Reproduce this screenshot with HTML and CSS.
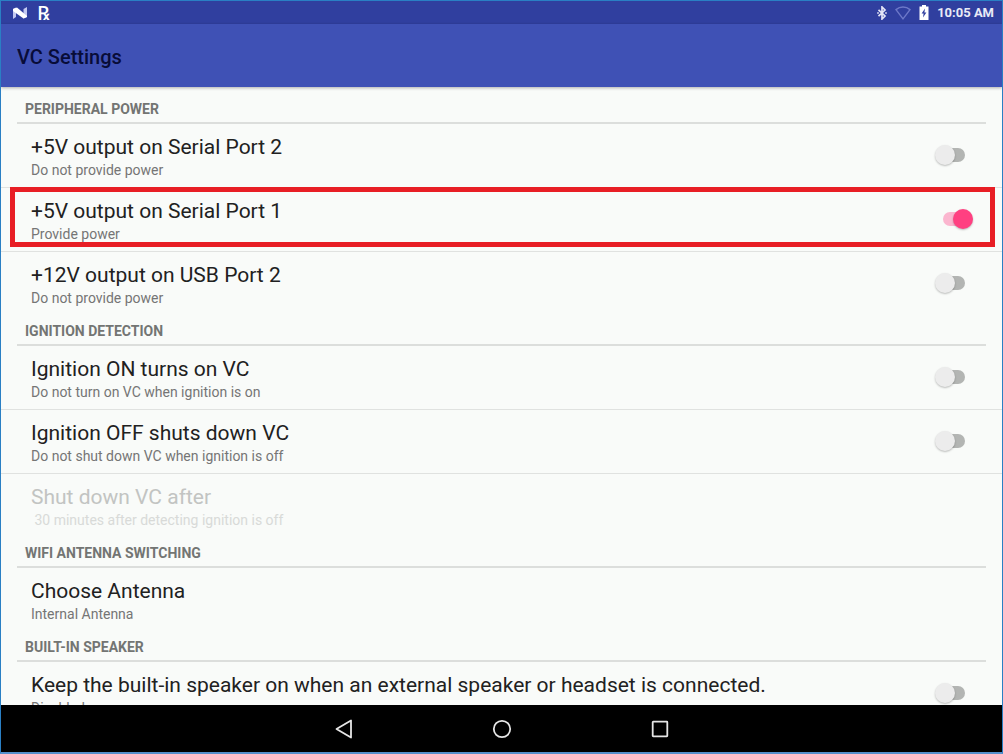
FILE: index.html
```html
<!DOCTYPE html>
<html lang="en">

<head>
    <meta charset="UTF-8" />
    <meta name="viewport" content="width=device-width, initial-scale=1.0" />
    <title>VC Settings</title>
    <link rel="stylesheet" href="styles.css">
</head>

<body>
    <div class="screen">
        <div class="status-bar">
            <div class="status-icons">
                <svg class="icon-n" width="14" height="12" viewBox="0 0 14 12" aria-hidden="true">
                    <path d="M0 2L3 0.5V10L0 12Z" fill="#c3c9f0" />
                    <path d="M10.5 2L14 0V10L10.5 11.5Z" fill="#c3c9f0" />
                    <path d="M0 2L4 0.5L14 9V10L10.5 11.5L0 4Z" fill="#fff" />
                </svg>
                <span class="icon-rx">℞</span>
            </div>
            <div class="status-icons right">
                <svg width="10" height="14" viewBox="0 0 10 14" fill="none" stroke="#e4e6f6" stroke-width="1.7" aria-hidden="true">
                    <path d="M1.5 3.8L8 10L5 13V1L8 4L1.5 10.2" />
                    <path d="M0.2 7H1.8M8.2 7H9.8" />
                </svg>
                <svg width="16" height="14" viewBox="0 0 16 14" fill="none" stroke="#6d78c8" stroke-width="1.4" aria-hidden="true">
                    <path d="M1 3.6C5 0.2 11 0.2 15 3.6L8 12.8Z" />
                </svg>
                <svg width="10" height="15" viewBox="0 0 10 15" aria-hidden="true">
                    <path d="M3 0H7V1.5H9.5V15H0.5V1.5H3Z" fill="#fff" />
                    <path d="M6 3.5L2.6 8.6H4.6L4 12.6L7.4 7.4H5.4Z" fill="#303f9f" />
                </svg>
                <span class="clock">10:05 AM</span>
            </div>
        </div>

        <header class="app-bar">
            <h1>VC Settings</h1>
        </header>

        <main class="content">
            <section>
                <h2>PERIPHERAL POWER</h2>
                <label class="row">
                    <span class="text">
                        <span class="title">+5V output on Serial Port 2</span>
                        <span class="summary">Do not provide power</span>
                    </span>
                    <input type="checkbox" role="switch" class="switch" />
                </label>
                <label class="row highlight">
                    <span class="text">
                        <span class="title">+5V output on Serial Port 1</span>
                        <span class="summary">Provide power</span>
                    </span>
                    <input type="checkbox" role="switch" class="switch" checked />
                </label>
                <label class="row">
                    <span class="text">
                        <span class="title">+12V output on USB Port 2</span>
                        <span class="summary">Do not provide power</span>
                    </span>
                    <input type="checkbox" role="switch" class="switch" />
                </label>
            </section>

            <section>
                <h2>IGNITION DETECTION</h2>
                <label class="row">
                    <span class="text">
                        <span class="title">Ignition ON turns on VC</span>
                        <span class="summary">Do not turn on VC when ignition is on</span>
                    </span>
                    <input type="checkbox" role="switch" class="switch" />
                </label>
                <label class="row">
                    <span class="text">
                        <span class="title">Ignition OFF shuts down VC</span>
                        <span class="summary">Do not shut down VC when ignition is off</span>
                    </span>
                    <input type="checkbox" role="switch" class="switch" />
                </label>
                <button type="button" class="row" disabled>
                    <span class="text">
                        <span class="title">Shut down VC after</span>
                        <span class="summary">&nbsp;30 minutes after detecting ignition is off</span>
                    </span>
                </button>
            </section>

            <section>
                <h2>WIFI ANTENNA SWITCHING</h2>
                <button type="button" class="row">
                    <span class="text">
                        <span class="title">Choose Antenna</span>
                        <span class="summary">Internal Antenna</span>
                    </span>
                </button>
            </section>

            <section>
                <h2>BUILT-IN SPEAKER</h2>
                <label class="row">
                    <span class="text">
                        <span class="title">Keep the built-in speaker on when an external speaker or headset is connected.</span>
                        <span class="summary">Disabled</span>
                    </span>
                    <input type="checkbox" role="switch" class="switch" />
                </label>
            </section>
        </main>

        <nav class="nav-bar">
            <button type="button" aria-label="Back">
                <svg width="20" height="20" viewBox="0 0 20 20"><path d="M17 1.5V18.5L2.5 10Z" /></svg>
            </button>
            <button type="button" aria-label="Home">
                <svg width="20" height="20" viewBox="0 0 20 20"><circle cx="10" cy="10" r="8.2" /></svg>
            </button>
            <button type="button" aria-label="Recent apps">
                <svg width="20" height="20" viewBox="0 0 20 20"><rect x="2.7" y="2.7" width="14.6" height="14.6" rx="0.5" /></svg>
            </button>
        </nav>
    </div>
</body>

</html>
```
FILE: styles.css
```css
* {
    box-sizing: border-box;
    margin: 0;
    padding: 0;
}

body {
    font-family: Roboto, 'Liberation Sans', sans-serif;
    color: #212121;
}

.screen {
    display: flex;
    flex-direction: column;
    height: 100vh;
    border: 1px solid #2a7fc4;
    border-bottom: 2px solid #5590cc;
    background-color: #f9fbf9;
    overflow: hidden;
}

/* Status bar */
.status-bar {
    display: flex;
    justify-content: space-between;
    align-items: center;
    flex: none;
    height: 23px;
    padding: 0 8px 0 12px;
    background-color: #303f9f;
}

.status-icons {
    display: flex;
    align-items: center;
    gap: 10px;
}

.status-icons.right {
    gap: 8px;
}

.icon-rx {
    font-family: 'Noto Sans', 'DejaVu Sans', sans-serif;
    font-size: 20px;
    font-weight: 500;
    line-height: 20px;
    color: #fff;
}

.clock {
    font-size: 13px;
    font-weight: 700;
    color: #e8eaf6;
}

/* App bar */
.app-bar {
    display: flex;
    align-items: center;
    flex: none;
    height: 63px;
    padding: 2px 16px 0;
    background-color: #3f51b5;
    box-shadow: 0 1px 3px rgba(0, 0, 0, 0.3);
    z-index: 1;
}

.app-bar h1 {
    font-size: 20px;
    font-weight: 500;
    color: #080c38;
}

/* Preference list */
.content {
    flex: 1;
    min-height: 0;
    padding-top: 6px;
    overflow: hidden;
}

h2 {
    height: 31px;
    margin: 0 16px;
    padding: 2px 8px 0;
    border-bottom: 2px solid #dcdedc;
    font-size: 14px;
    font-weight: 700;
    line-height: 28px;
    color: #737573;
}

.row {
    display: flex;
    align-items: center;
    justify-content: space-between;
    position: relative;
    width: 100%;
    height: 63px;
    padding: 0 37px 2px 30px;
    border: none;
    background: none;
    font-family: inherit;
    color: inherit;
    text-align: left;
}

.row + .row {
    height: 64px;
    border-top: 1px solid #e0e2e0;
}

.text {
    display: flex;
    flex-direction: column;
    padding-top: 4px;
}

.title {
    font-size: 21px;
    line-height: 26px;
}

.summary {
    font-size: 14px;
    line-height: 20px;
    color: #757575;
}

.row:disabled .title {
    color: #c2c4c2;
}

.row:disabled .summary {
    color: #d8dad8;
}

/* Red frame around the highlighted setting */
.highlight::after {
    content: "";
    position: absolute;
    top: -1px;
    right: 7px;
    bottom: 4px;
    left: 9px;
    border: 5px solid #e81e25;
    pointer-events: none;
}

/* Switch */
.switch {
    appearance: none;
    position: relative;
    flex: none;
    width: 22px;
    height: 14px;
    border-radius: 7px;
    background-color: #b3b5b3;
}

.switch::before {
    content: "";
    position: absolute;
    top: -3px;
    left: -8px;
    width: 20px;
    height: 20px;
    border-radius: 50%;
    background-color: #ececec;
    box-shadow: 0 1px 2px rgba(0, 0, 0, 0.25);
}

.switch:checked {
    background-color: #fbb6cf;
}

.switch:checked::before {
    left: 10px;
    background-color: #ff4081;
}

/* Navigation bar */
.nav-bar {
    display: flex;
    justify-content: center;
    align-items: center;
    gap: 110px;
    flex: none;
    height: 47px;
    background-color: #000;
    z-index: 1;
}

.nav-bar button {
    display: flex;
    justify-content: center;
    align-items: center;
    width: 48px;
    height: 47px;
    border: none;
    background: none;
}

.nav-bar svg {
    fill: none;
    stroke: #e6e6e6;
    stroke-width: 1.8;
    stroke-linejoin: round;
}
```
